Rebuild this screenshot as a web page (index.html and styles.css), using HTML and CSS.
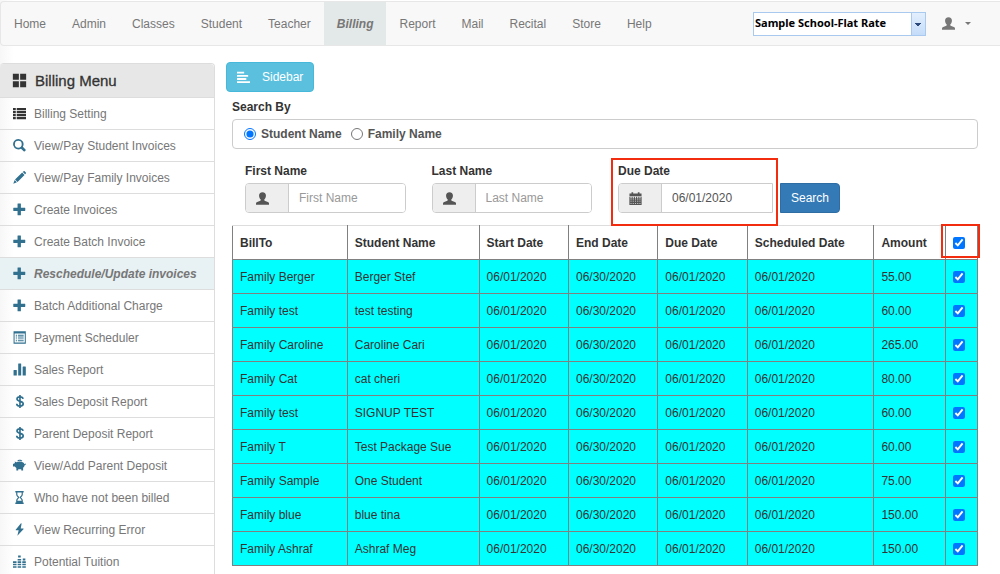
FILE: index.html
```html
<!DOCTYPE html>
<html lang="en">
<head>
  <meta charset="UTF-8" />
  <meta name="viewport" content="width=device-width, initial-scale=1.0" />
  <title>Reschedule/Update invoices</title>
  <link rel="stylesheet" href="styles.css">
</head>
<body>
  <svg class="sprite" aria-hidden="true">
    <symbol id="i-large" viewBox="0 0 14 14"><path d="M.8.8h5.600v5.600H.8zM7.600.8h5.600v5.600H7.600zM.8 7.600h5.600v5.600H.8zM7.600 7.600h5.600v5.600H7.600z"/></symbol>
    <symbol id="i-list" viewBox="0 0 14 14"><path d="M0 1h3v2.400H0zM4 1h10v2.400H4zM0 4.300h3v2.400H0zM4 4.300h10v2.400H4zM0 7.600h3V10H0zM4 7.600h10V10H4zM0 10.900h3v2.400H0zM4 10.900h10v2.400H4z"/></symbol>
    <symbol id="i-search" viewBox="0 0 14 14"><path fill-rule="evenodd" d="M5.700 0a5.600 5.600 0 1 0 2.900 10.400l2.900 2.900a.9.9 0 0 0 1.200 0l.8-.8a.9.9 0 0 0 0-1.200l-2.900-2.900A5.600 5.600 0 0 0 5.700 0zm0 2a3.700 3.700 0 1 1 0 7.400 3.700 3.700 0 0 1 0-7.400z"/></symbol>
    <symbol id="i-pencil" viewBox="0 0 14 14"><path d="M10.600 1.100l.8-.8a.9.9 0 0 1 1.200 0l1.200 1.200a.9.9 0 0 1 0 1.200l-.8.8zM9.900 1.700l2.500 2.500-7.500 7.600-2.700-2.700zM1.800 9.800l2.400 2.400L.3 13.800z"/></symbol>
    <symbol id="i-plus" viewBox="0 0 14 14"><path d="M5.300.5h2.800q.4 0 .4.400v4.200h4.300q.4 0 .4.400v2.700q0 .4-.4.400H8.500v4.200q0 .4-.4.400H5.300q-.4 0-.4-.4V8.600H.7q-.4 0-.4-.4V5.500q0-.4.400-.4h4.200V.9q0-.4.400-.4z"/></symbol>
    <symbol id="i-listalt" viewBox="0 0 14 14"><path fill-rule="evenodd" d="M.6.4h13.200v13.200H.6zM1.700 2.600v9.900h11V2.600zM3 4h1.300v1H3zM5.300 4h6.200v1H5.300zM3 6h1.300v1H3zM5.300 6h6.200v1H5.300zM3 8h1.300v1H3zM5.300 8h6.200v1H5.300zM3 10h1.300v1H3zM5.300 10h6.200v1H5.300z"/></symbol>
    <symbol id="i-stats" viewBox="0 0 14 14"><path d="M1 7.500h2.700q.4 0 .4.400v5.600H.6V7.900q0-.4.400-.4zM6 .5h2.400q.4 0 .4.400v12.600H5.600V.9q0-.4.400-.4zM10.800 3.800h2.600q.4 0 .4.400v9.300h-3.400V4.200q0-.4.400-.4z"/></symbol>
    <symbol id="i-usd" viewBox="0 0 14 14"><path fill="none" stroke="currentColor" stroke-width="1.8" d="M10.800 4.200C10.600 2.700 9.300 2 7.500 2 5.600 2 4.300 2.900 4.300 4.300c0 3.300 6.700 1.700 6.700 5.200 0 1.600-1.400 2.500-3.400 2.500S4.100 11.100 4 9.400M7.500 0v14"/></symbol>
    <symbol id="i-piggy" viewBox="0 0 14 14"><path d="M4.600 2.100C5.300.4 9.100.2 10.100 2l-.5.400Q7 1.400 5.100 2.400zM1.800 2.600l1.900.8Q7.500 1.600 11 3.700q1 .7 1.400 2l1.500-.9.300.8-1.600 1.200q-.2 1.500-1.700 2.700v2.800H8.900V11H5.600v1.300H3.600v-2.600Q2.600 9 2 8H-.2V5.100h1.500q.3-.8.900-1.300z"/></symbol>
    <symbol id="i-hourglass" viewBox="0 0 14 14"><path fill-rule="evenodd" d="M2.500 0h9v1.600h-.9v1.900C10.600 5 9.700 6.100 8.600 7c1.100.9 2 2 2 3.500v1.900h.9V14h-9v-1.600h.9v-1.900c0-1.500.9-2.600 2-3.500-1.100-.9-2-2-2-3.500V1.600h-.9zM4.700 1.600v1.900c0 1.200.9 2.100 2 2.900v1.200c-1.100.8-2 1.700-2 2.900h4.600c0-1.200-.9-2.100-2-2.900V6.400c1.100-.8 2-1.700 2-2.900V1.600z"/></symbol>
    <symbol id="i-flash" viewBox="0 0 14 14"><path d="M8.600.2L2.900 7.300q-.2.400.2.400h3L4.700 13.800l6.800-7.400q.2-.5-.3-.5H8.300L9.300.5z"/></symbol>
    <symbol id="i-equalizer" viewBox="0 0 14 14"><path d="M0 12h3.800v1.700H0zM0 9.400h3.800v1.700H0zM0 6.800h3.800v1.700H0zM5 12h3.800v1.700H5zM5 9.400h3.800v1.700H5zM5 6.800h3.800v1.700H5zM5 4.200h3.800v1.700H5zM5.500.6h2.800v2H5.500zM10 12h3.800v1.700H10zM10 9.400h3.800v1.700H10zM10 6.800h3.800v1.700H10zM10.500 3.900h2.800v2h-2.800z"/></symbol>
    <symbol id="i-user" viewBox="0 0 14 14"><path d="M7 .2c2.400 0 3.700 1.500 3.700 3.500 0 1.800-.7 3.200-1.700 4.200v1c0 .5.400.7 1 .9l2.700 1.100c.8.400 1.300.8 1.300 1.500v1.200H0v-1.200c0-.7.500-1.100 1.300-1.500L4 9.800c.6-.2 1-.4 1-.9v-1C4 6.900 3.300 5.500 3.300 3.700 3.300 1.700 4.600.2 7 .2z"/></symbol>
    <symbol id="i-calendar" viewBox="0 0 14 14"><path d="M2.700.2h1.800v1.300h5V.2h1.800v1.300h2.200v3H.5v-3h2.200z"/><path fill="none" stroke="currentColor" stroke-width="1.2" d="M1 5v8.500h12V5M3.400 5v8.500M5.800 5v8.500M8.200 5v8.500M10.600 5v8.500M1 7.500h12M1 9.500h12M1 11.500h12"/></symbol>
    <symbol id="i-align" viewBox="0 0 14 14"><path d="M0 .8h7.700v2H0zM0 4.200h12v2H0zM0 7.600h10v2H0zM0 11h14v2H0z"/></symbol>
  </svg>

  <nav class="navbar">
    <ul class="nav-links">
      <li><a href="#">Home</a></li>
      <li><a href="#">Admin</a></li>
      <li><a href="#">Classes</a></li>
      <li><a href="#">Student</a></li>
      <li><a href="#">Teacher</a></li>
      <li><a href="#" class="active">Billing</a></li>
      <li><a href="#">Report</a></li>
      <li><a href="#">Mail</a></li>
      <li><a href="#">Recital</a></li>
      <li><a href="#">Store</a></li>
      <li><a href="#">Help</a></li>
    </ul>
    <div class="nav-right">
      <select class="school" aria-label="School">
        <option>Sample School-Flat Rate</option>
      </select>
      <button class="user-menu" type="button" aria-label="Account">
        <svg class="icon"><use href="#i-user"/></svg>
        <span class="caret"></span>
      </button>
    </div>
  </nav>

  <div class="page">
    <aside class="sidebar">
      <h2><svg class="icon"><use href="#i-large"/></svg>Billing Menu</h2>
      <ul class="menu">
        <li><a href="#"><svg class="icon dark"><use href="#i-list"/></svg>Billing Setting</a></li>
        <li><a href="#"><svg class="icon"><use href="#i-search"/></svg>View/Pay Student Invoices</a></li>
        <li><a href="#"><svg class="icon"><use href="#i-pencil"/></svg>View/Pay Family Invoices</a></li>
        <li><a href="#"><svg class="icon"><use href="#i-plus"/></svg>Create Invoices</a></li>
        <li><a href="#"><svg class="icon"><use href="#i-plus"/></svg>Create Batch Invoice</a></li>
        <li><a href="#" class="active"><svg class="icon"><use href="#i-plus"/></svg>Reschedule/Update invoices</a></li>
        <li><a href="#"><svg class="icon"><use href="#i-plus"/></svg>Batch Additional Charge</a></li>
        <li><a href="#"><svg class="icon"><use href="#i-listalt"/></svg>Payment Scheduler</a></li>
        <li><a href="#"><svg class="icon"><use href="#i-stats"/></svg>Sales Report</a></li>
        <li><a href="#"><svg class="icon"><use href="#i-usd"/></svg>Sales Deposit Report</a></li>
        <li><a href="#"><svg class="icon"><use href="#i-usd"/></svg>Parent Deposit Report</a></li>
        <li><a href="#"><svg class="icon"><use href="#i-piggy"/></svg>View/Add Parent Deposit</a></li>
        <li><a href="#"><svg class="icon"><use href="#i-hourglass"/></svg>Who have not been billed</a></li>
        <li><a href="#"><svg class="icon"><use href="#i-flash"/></svg>View Recurring Error</a></li>
        <li><a href="#"><svg class="icon"><use href="#i-equalizer"/></svg>Potential Tuition</a></li>
      </ul>
    </aside>

    <main class="content">
      <button class="btn btn-info" type="button"><svg class="icon"><use href="#i-align"/></svg>Sidebar</button>

      <form class="search" onsubmit="return false">
        <div class="search-title" id="searchBy">Search By</div>
        <div class="search-by" role="radiogroup" aria-labelledby="searchBy">
          <label><input type="radio" name="searchBy" checked />Student Name</label>
          <label><input type="radio" name="searchBy" />Family Name</label>
        </div>

        <div class="fields">
          <div class="field">
            <label for="firstName">First Name</label>
            <div class="input-group">
              <span class="addon"><svg class="icon"><use href="#i-user"/></svg></span>
              <input type="text" id="firstName" placeholder="First Name" />
            </div>
          </div>
          <div class="field">
            <label for="lastName">Last Name</label>
            <div class="input-group">
              <span class="addon"><svg class="icon"><use href="#i-user"/></svg></span>
              <input type="text" id="lastName" placeholder="Last Name" />
            </div>
          </div>
          <div class="due">
            <div class="field marked">
              <label for="dueDate">Due Date</label>
              <div class="input-group date">
                <span class="addon"><svg class="icon"><use href="#i-calendar"/></svg></span>
                <input type="text" id="dueDate" value="06/01/2020" />
              </div>
            </div>
            <button class="btn btn-primary" type="submit">Search</button>
          </div>
        </div>
      </form>

      <table class="invoices">
        <colgroup>
          <col class="c-bill"><col class="c-student"><col class="c-date"><col class="c-date"><col class="c-date"><col class="c-sched"><col class="c-amount"><col>
        </colgroup>
        <thead>
          <tr>
            <th>BillTo</th><th>Student Name</th><th>Start Date</th><th>End Date</th><th>Due Date</th><th>Scheduled Date</th><th>Amount</th>
            <th class="marked"><input type="checkbox" id="checkAll" aria-label="Select all" checked /></th>
          </tr>
        </thead>
        <tbody>
          <tr><td>Family Berger</td><td>Berger Stef</td><td>06/01/2020</td><td>06/30/2020</td><td>06/01/2020</td><td>06/01/2020</td><td>55.00</td><td><input type="checkbox" aria-label="Select Berger Stef" checked /></td></tr>
          <tr><td>Family test</td><td>test testing</td><td>06/01/2020</td><td>06/30/2020</td><td>06/01/2020</td><td>06/01/2020</td><td>60.00</td><td><input type="checkbox" aria-label="Select test testing" checked /></td></tr>
          <tr><td>Family Caroline</td><td>Caroline Cari</td><td>06/01/2020</td><td>06/30/2020</td><td>06/01/2020</td><td>06/01/2020</td><td>265.00</td><td><input type="checkbox" aria-label="Select Caroline Cari" checked /></td></tr>
          <tr><td>Family Cat</td><td>cat cheri</td><td>06/01/2020</td><td>06/30/2020</td><td>06/01/2020</td><td>06/01/2020</td><td>80.00</td><td><input type="checkbox" aria-label="Select cat cheri" checked /></td></tr>
          <tr><td>Family test</td><td>SIGNUP TEST</td><td>06/01/2020</td><td>06/30/2020</td><td>06/01/2020</td><td>06/01/2020</td><td>60.00</td><td><input type="checkbox" aria-label="Select SIGNUP TEST" checked /></td></tr>
          <tr><td>Family T</td><td>Test Package Sue</td><td>06/01/2020</td><td>06/30/2020</td><td>06/01/2020</td><td>06/01/2020</td><td>60.00</td><td><input type="checkbox" aria-label="Select Test Package Sue" checked /></td></tr>
          <tr><td>Family Sample</td><td>One Student</td><td>06/01/2020</td><td>06/30/2020</td><td>06/01/2020</td><td>06/01/2020</td><td>75.00</td><td><input type="checkbox" aria-label="Select One Student" checked /></td></tr>
          <tr><td>Family blue</td><td>blue tina</td><td>06/01/2020</td><td>06/30/2020</td><td>06/01/2020</td><td>06/01/2020</td><td>150.00</td><td><input type="checkbox" aria-label="Select blue tina" checked /></td></tr>
          <tr><td>Family Ashraf</td><td>Ashraf Meg</td><td>06/01/2020</td><td>06/30/2020</td><td>06/01/2020</td><td>06/01/2020</td><td>150.00</td><td><input type="checkbox" aria-label="Select Ashraf Meg" checked /></td></tr>
        </tbody>
      </table>
    </main>
  </div>

  <script>
    const checkAll = document.getElementById("checkAll");
    checkAll.addEventListener("change", () => {
      document.querySelectorAll(".invoices tbody input").forEach((box) => {
        box.checked = checkAll.checked;
      });
    });
  </script>
</body>
</html>
```
FILE: styles.css
```css
* {
  box-sizing: border-box;
}
html {
  overflow: hidden auto;
  scrollbar-width: none;
}
body {
  margin: 0;
  padding-top: 1px;
  font-family: "Liberation Sans", Arial, sans-serif;
  font-size: 12px;
  line-height: 18px;
  color: #333;
  background: linear-gradient(to right, #f7f7f7, #fff 14px);
}
button, input {
  font: inherit;
}
ul {
  list-style: none;
  margin: 0;
  padding: 0;
}
a {
  color: #777;
  text-decoration: none;
}
.sprite {
  display: none;
}
.icon {
  width: 13px;
  height: 13px;
  flex: none;
  fill: currentColor;
}

/* top bar */
.navbar {
  display: flex;
  justify-content: space-between;
  height: 45px;
  background: #f8f8f8;
  border: 1px solid #e7e7e7;
  border-width: 1px 0 1px 1px;
  border-radius: 4px 0 0 4px;
}
.nav-links {
  display: flex;
}
.nav-links a {
  display: block;
  padding: 13px 13px 12px;
}
.nav-links .active {
  background: #e3e8e8;
  font-weight: bold;
  font-style: italic;
}
.nav-right {
  display: flex;
  align-items: center;
  gap: 16px;
  padding-right: 29px;
}
.school {
  appearance: none;
  width: 173px;
  height: 24px;
  padding: 0 16px 2px 1px;
  border: 1px solid #a9c9ef;
  border-radius: 0;
  color: #000;
  font: bold 11px "Noto Sans", sans-serif;
  background:
    linear-gradient(#2c4a7c, #2c4a7c) right 4px top 10px / 6px 1px no-repeat,
    linear-gradient(#2c4a7c, #2c4a7c) right 5px top 11px / 4px 1px no-repeat,
    linear-gradient(#2c4a7c, #2c4a7c) right 6px top 12px / 2px 1px no-repeat,
    linear-gradient(#a9c9ef, #a9c9ef) right 13px top 0 / 1px 100% no-repeat,
    linear-gradient(#e3effd, #c4dcf9) right / 13px 100% no-repeat,
    #fff;
}
.user-menu {
  display: flex;
  align-items: center;
  gap: 10px;
  padding: 0;
  border: 0;
  background: none;
  color: #777;
}
.caret {
  border: 3px solid transparent;
  border-top-color: #777;
  border-bottom: 0;
}

.page {
  display: flex;
  align-items: flex-start;
  gap: 11px;
  padding: 16px 22px 0 0;
}

/* left menu */
.sidebar {
  width: 215px;
  flex: none;
  margin-top: 1px;
  border: 1px solid #ddd;
  border-left: 0;
  border-radius: 4px 4px 0 0;
}
.sidebar h2 {
  display: flex;
  align-items: center;
  gap: 8px;
  height: 34px;
  margin: 0;
  padding-left: 12px;
  background: #e7e7e7;
  border-bottom: 1px solid #ddd;
  border-radius: 4px 4px 0 0;
  font-size: 15px;
  font-weight: normal;
  -webkit-text-stroke: 0.3px;
}
.sidebar h2 .icon {
  width: 15px;
  height: 15px;
}
.menu a {
  display: flex;
  align-items: center;
  gap: 8px;
  height: 32px;
  padding-left: 13px;
  border-bottom: 1px solid #ddd;
}
.menu .icon {
  color: #31708f;
}
.menu .dark {
  color: #333;
}
.menu .active {
  background: #e8f1f4;
  font-weight: bold;
  font-style: italic;
}

/* main column */
.content {
  flex: 1;
  min-width: 0;
}
.btn {
  display: inline-flex;
  align-items: center;
  justify-content: center;
  height: 30px;
  padding: 0 10px;
  border: 1px solid;
  border-radius: 4px;
  color: #fff;
  font-weight: normal;
}
.btn-info {
  gap: 12px;
  background: #5bc0de;
  border-color: #46b8da;
}
.btn-primary {
  background: #337ab7;
  border-color: #2e6da4;
  border-radius: 0 4px 4px 0;
}
.search {
  margin: 6px 0 0 6px;
  font-weight: bold;
}
.search-by {
  display: flex;
  align-items: center;
  gap: 9px;
  height: 30px;
  margin-top: 3px;
  padding: 0 11px;
  border: 1px solid #ccc;
  border-radius: 4px;
  color: #555;
}
.search-by label {
  display: flex;
  align-items: center;
  gap: 5px;
}
.search-by input {
  width: 12px;
  height: 12px;
  margin: 0;
}
.fields {
  display: grid;
  grid-template-columns: repeat(4, minmax(0, 1fr));
  gap: 26px;
  padding: 13px 13px 12px;
}
.field label {
  display: block;
  margin-bottom: 3px;
}
.due {
  grid-column: span 2;
  display: flex;
  align-items: flex-end;
  gap: 7px;
}
.due .field {
  width: 155px;
}
.input-group {
  display: flex;
  height: 30px;
  border: 1px solid #ccc;
  border-radius: 4px;
  overflow: hidden;
  font-weight: normal;
}
.date {
  border-radius: 4px 0 0 4px;
}
.addon {
  display: flex;
  align-items: center;
  flex: none;
  width: 43px;
  padding-left: 10px;
  background: #eee;
  border-right: 1px solid #ccc;
  color: #555;
}
.input-group input {
  flex: 1;
  min-width: 0;
  padding: 0 10px;
  border: 0;
  color: #555;
  background: #fff;
}
.input-group input::placeholder {
  color: #999;
}

/* red highlight boxes */
.marked {
  position: relative;
}
.marked::after {
  content: "";
  position: absolute;
  inset: -4px -5px -13px -7px;
  border: 2px solid #f22c0e;
  pointer-events: none;
}
th.marked::after {
  inset: -2px -3px 1px -5px;
}

/* invoice table */
.invoices {
  width: calc(100% - 6px);
  margin-left: 6px;
  table-layout: fixed;
  border-collapse: collapse;
}
.invoices th, .invoices td {
  height: 34px;
  padding: 0 7px;
  border: 1px solid #808080;
  text-align: left;
}
.invoices th {
  border-top-color: #ddd;
}
.invoices td {
  background: #00ffff;
}
.invoices input {
  display: block;
  width: 12px;
  height: 12px;
  margin: 0;
}
.c-bill {
  width: 15.4%;
}
.c-student {
  width: 17.7%;
}
.c-date {
  width: 12%;
}
.c-sched {
  width: 17%;
}
.c-amount {
  width: 9.6%;
}
```
